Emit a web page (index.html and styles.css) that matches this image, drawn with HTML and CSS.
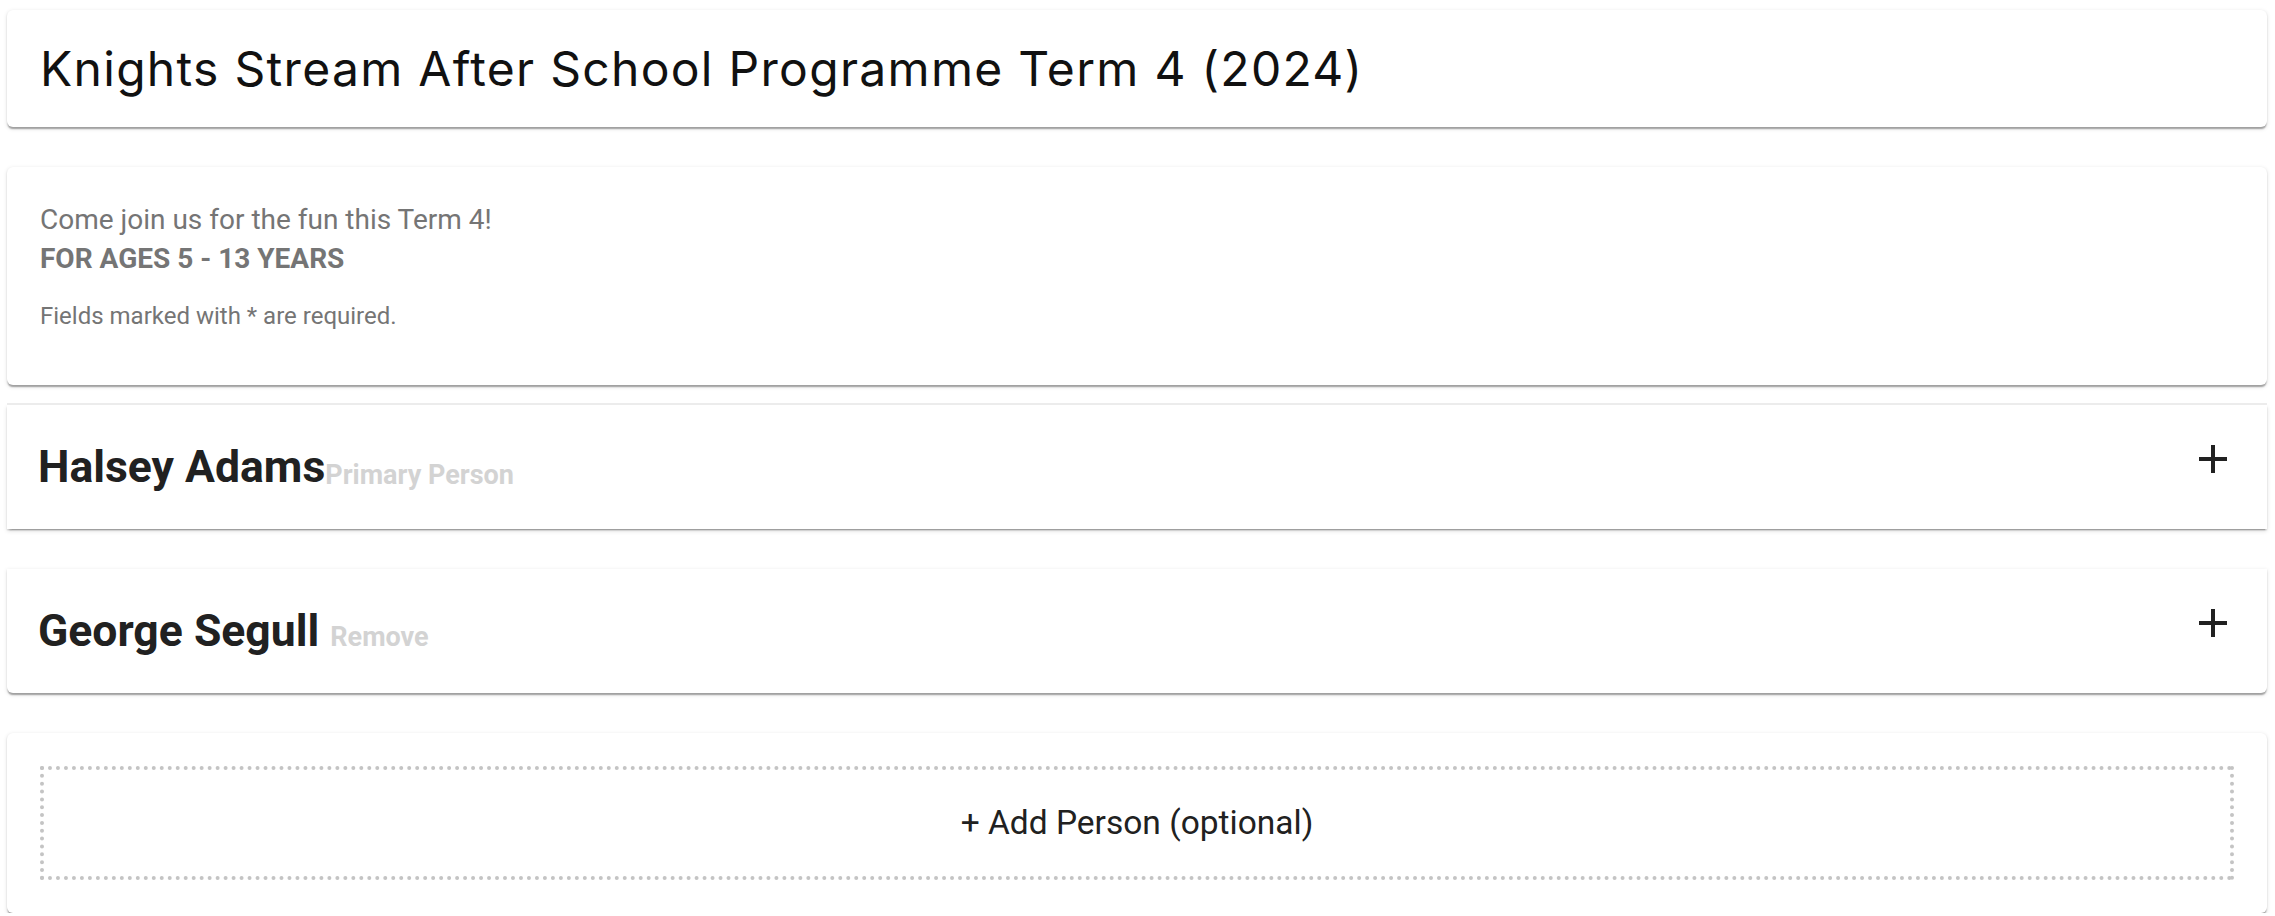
FILE: index.html
```html
<!DOCTYPE html>
<html lang="en">
<head>
<meta charset="utf-8">
<title>Knights Stream After School Programme Term 4 (2024)</title>
<link rel="stylesheet" href="styles.css">
</head>
<body>
<main class="page">
  <section class="card card-title">
    <h1 class="title">Knights Stream After School Programme Term 4 (2024)</h1>
  </section>

  <section class="card card-intro">
    <p class="intro-lead">Come join us for the fun this Term 4!<br><strong class="intro-strong">FOR AGES 5 - 13 YEARS</strong></p>
    <p class="intro-note">Fields marked with * are required.</p>
  </section>

  <section class="card person person-first">
    <div class="person-head">
      <h2 class="person-name">Halsey Adams<span class="person-tag tag-primary">Primary Person</span></h2>
      <svg class="expand-icon" width="28" height="28" viewBox="0 0 28 28" aria-hidden="true"><path d="M14 0V28M0 14H28" stroke="#212121" stroke-width="4" fill="none"/></svg>
    </div>
  </section>

  <section class="card person person-last">
    <div class="person-head">
      <h2 class="person-name">George Segull <span class="person-tag">Remove</span></h2>
      <svg class="expand-icon" width="28" height="28" viewBox="0 0 28 28" aria-hidden="true"><path d="M14 0V28M0 14H28" stroke="#212121" stroke-width="4" fill="none"/></svg>
    </div>
  </section>

  <section class="card card-add">
    <div class="add-box">+ Add Person (optional)</div>
  </section>
</main>
</body>
</html>
```

FILE: styles.css
```css
* {
  box-sizing: border-box;
}

html, body {
  margin: 0;
  padding: 0;
  background: #ffffff;
}

body {
  font-family: Roboto, "Liberation Sans", Arial, sans-serif;
  color: #212121;
}

.page {
  display: flex;
  flex-direction: column;
  padding: 10px 8px 0 7px;
}

.card {
  background: #ffffff;
  border-radius: 6px;
  box-shadow:
    0 3px 1.5px -1.5px rgba(0, 0, 0, 0.2),
    0 1.5px 1.5px 0 rgba(0, 0, 0, 0.14),
    0 1.5px 4.5px 0 rgba(0, 0, 0, 0.12);
}

/* Title card */
.card-title {
  height: 117px;
  padding: 33px 33px;
  margin-bottom: 40px;
}

.title {
  margin: 0;
  font-family: Inter, "Noto Sans", sans-serif;
  font-weight: 400;
  font-size: 48px;
  line-height: 51px;
  letter-spacing: 1.3px;
  color: #111111;
  white-space: nowrap;
}

/* Intro card */
.card-intro {
  height: 218px;
  padding: 33px 33px 0 33px;
  margin-bottom: 20px;
  color: #757575;
}

.intro-lead {
  margin: 0;
  font-size: 28px;
  line-height: 39px;
  font-weight: 400;
}

.intro-strong {
  font-weight: 700;
}

.intro-note {
  margin: 19.5px 0 0 0;
  font-size: 24px;
  line-height: 36px;
}

/* Person accordions */
.person {
  height: 124px;
  margin-bottom: 40px;
}

.person-first {
  border-radius: 0;
  box-shadow:
    0 -2px 0 0 #ececec,
    0 3px 1.5px -1.5px rgba(0, 0, 0, 0.2),
    0 1.5px 1.5px 0 rgba(0, 0, 0, 0.14),
    0 1.5px 4.5px 0 rgba(0, 0, 0, 0.12);
}

.person-last {
  border-radius: 0 0 6px 6px;
}

.person-head {
  display: flex;
  justify-content: space-between;
  align-items: flex-start;
  padding: 35px 40px 35px 31px;
}

.person-name {
  margin: 0;
  font-size: 44.5px;
  line-height: 54px;
  font-weight: 700;
  color: #212121;
  white-space: nowrap;
}

.person-tag {
  font-size: 27px;
  font-weight: 700;
  color: #d3d3d3;
}

.tag-primary {
  vertical-align: -2px;
}

.expand-icon {
  display: block;
  margin-top: 5px;
  flex: none;
}

/* Add person card */
.card-add {
  height: 180px;
  padding: 33px;
}

.add-box {
  height: 114px;
  border: 4px dotted #c4c4c4;
  display: flex;
  align-items: center;
  justify-content: center;
  font-size: 33.5px;
  line-height: 50px;
  color: #212121;
}
```
